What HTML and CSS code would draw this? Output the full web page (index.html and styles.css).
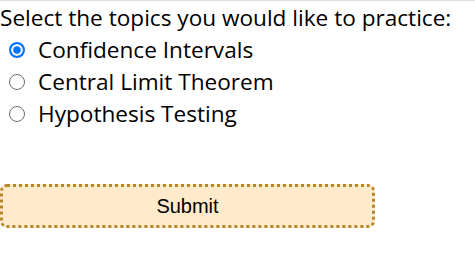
FILE: index.html
```html
<!DOCTYPE html>
<html>
<head>
<meta charset="utf-8">
<link rel="stylesheet" href="styles.css">
</head>
<body>
<div class="quiz">
  <div class="prompt">Select the topics you would like to practice:</div>
  <label class="opt"><input type="radio" name="t" checked><span>Confidence Intervals</span></label>
  <label class="opt"><input type="radio" name="t"><span>Central Limit Theorem</span></label>
  <label class="opt"><input type="radio" name="t"><span>Hypothesis Testing</span></label>
  <button class="submit">Submit</button>
</div>
</body>
</html>
```
FILE: styles.css
```css
html, body { margin: 0; padding: 0; background: #fff; }
body { border-top: 1px solid #dcdcdc; }
.quiz {
  display: flex;
  flex-direction: column;
  align-items: flex-start;
  padding-top: 1px;
  font-family: "Open Sans", "Noto Sans", sans-serif;
  font-size: 22.6px;
  color: #000;
}
.prompt { line-height: 32px; }
.opt { display: flex; align-items: center; line-height: 32px; }
.opt input {
  appearance: none;
  -webkit-appearance: none;
  flex: none;
  box-sizing: border-box;
  width: 16px; height: 16px;
  margin: 0 13px 0 9px;
  border: 1.6px solid #6b6b6b;
  border-radius: 50%;
  background: #fff;
}
.opt input:checked {
  border: 2px solid #0075ff;
  background: #0075ff;
  box-shadow: inset 0 0 0 2.2px #fff;
}
.submit {
  margin-top: 54px;
  width: 375px;
  height: 44px;
  background: #ffebcc;
  border: 3px dotted #b8862b;
  border-radius: 7px;
  font-family: "Liberation Sans", Arial, sans-serif;
  font-size: 20px;
  color: #000;
  padding: 0;
}
```
